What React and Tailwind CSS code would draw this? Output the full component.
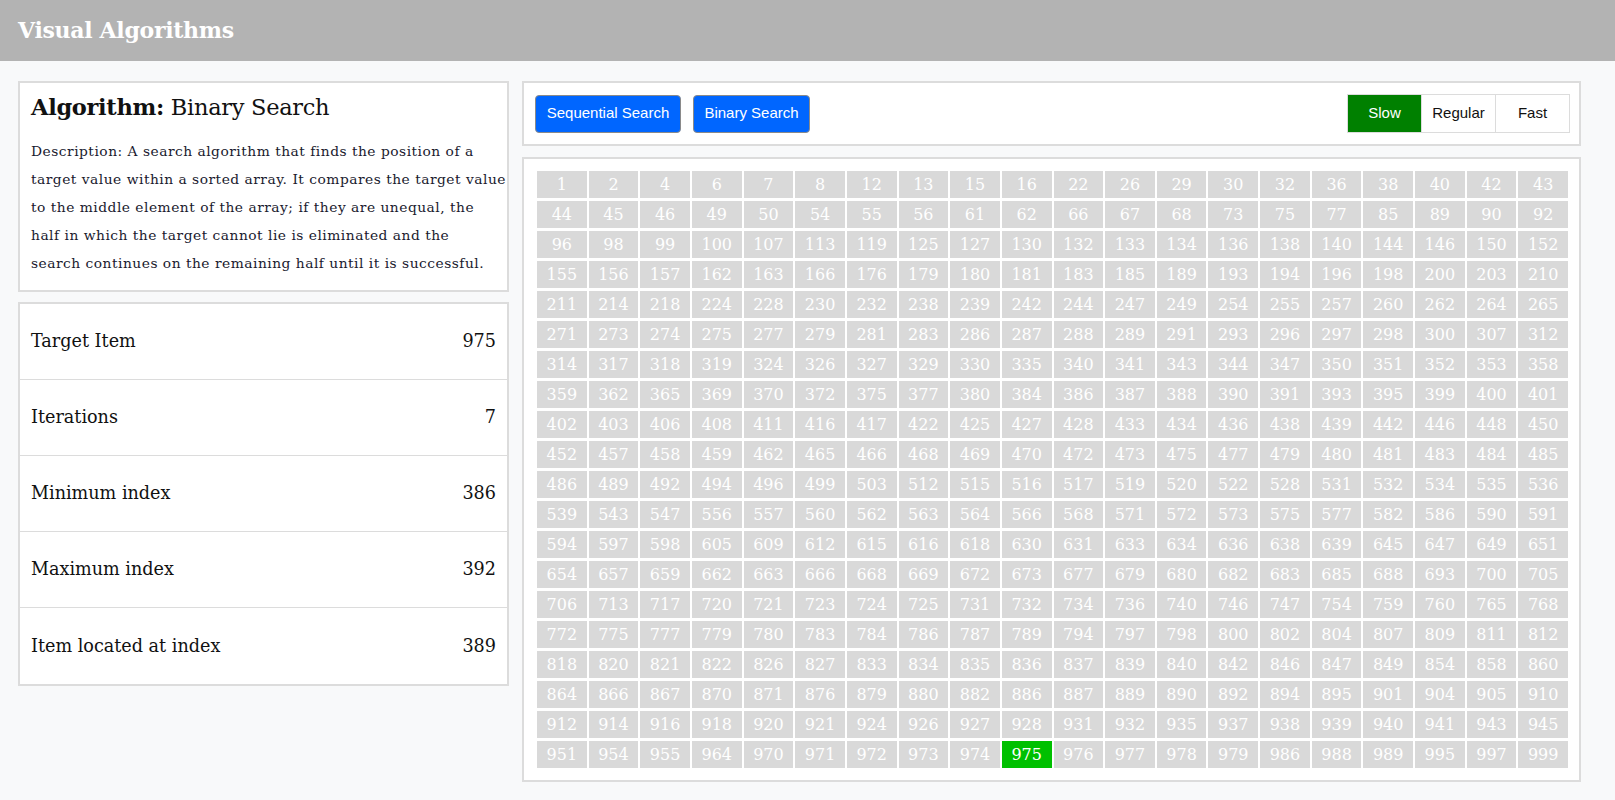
import { useState } from "react";

// Sorted array shown in the grid (20 x 20)
const items = [
  1, 2, 4, 6, 7, 8, 12, 13, 15, 16, 22, 26, 29, 30, 32, 36, 38, 40, 42, 43,
  44, 45, 46, 49, 50, 54, 55, 56, 61, 62, 66, 67, 68, 73, 75, 77, 85, 89, 90, 92,
  96, 98, 99, 100, 107, 113, 119, 125, 127, 130, 132, 133, 134, 136, 138, 140, 144, 146, 150, 152,
  155, 156, 157, 162, 163, 166, 176, 179, 180, 181, 183, 185, 189, 193, 194, 196, 198, 200, 203, 210,
  211, 214, 218, 224, 228, 230, 232, 238, 239, 242, 244, 247, 249, 254, 255, 257, 260, 262, 264, 265,
  271, 273, 274, 275, 277, 279, 281, 283, 286, 287, 288, 289, 291, 293, 296, 297, 298, 300, 307, 312,
  314, 317, 318, 319, 324, 326, 327, 329, 330, 335, 340, 341, 343, 344, 347, 350, 351, 352, 353, 358,
  359, 362, 365, 369, 370, 372, 375, 377, 380, 384, 386, 387, 388, 390, 391, 393, 395, 399, 400, 401,
  402, 403, 406, 408, 411, 416, 417, 422, 425, 427, 428, 433, 434, 436, 438, 439, 442, 446, 448, 450,
  452, 457, 458, 459, 462, 465, 466, 468, 469, 470, 472, 473, 475, 477, 479, 480, 481, 483, 484, 485,
  486, 489, 492, 494, 496, 499, 503, 512, 515, 516, 517, 519, 520, 522, 528, 531, 532, 534, 535, 536,
  539, 543, 547, 556, 557, 560, 562, 563, 564, 566, 568, 571, 572, 573, 575, 577, 582, 586, 590, 591,
  594, 597, 598, 605, 609, 612, 615, 616, 618, 630, 631, 633, 634, 636, 638, 639, 645, 647, 649, 651,
  654, 657, 659, 662, 663, 666, 668, 669, 672, 673, 677, 679, 680, 682, 683, 685, 688, 693, 700, 705,
  706, 713, 717, 720, 721, 723, 724, 725, 731, 732, 734, 736, 740, 746, 747, 754, 759, 760, 765, 768,
  772, 775, 777, 779, 780, 783, 784, 786, 787, 789, 794, 797, 798, 800, 802, 804, 807, 809, 811, 812,
  818, 820, 821, 822, 826, 827, 833, 834, 835, 836, 837, 839, 840, 842, 846, 847, 849, 854, 858, 860,
  864, 866, 867, 870, 871, 876, 879, 880, 882, 886, 887, 889, 890, 892, 894, 895, 901, 904, 905, 910,
  912, 914, 916, 918, 920, 921, 924, 926, 927, 928, 931, 932, 935, 937, 938, 939, 940, 941, 943, 945,
  951, 954, 955, 964, 970, 971, 972, 973, 974, 975, 976, 977, 978, 979, 986, 988, 989, 995, 997, 999,
];

const stats = [
  { label: "Target Item", value: 975 },
  { label: "Iterations", value: 7 },
  { label: "Minimum index", value: 386 },
  { label: "Maximum index", value: 392 },
  { label: "Item located at index", value: 389 },
];

// description broken the same way the original column wraps it
const descLines = [
  "Description: A search algorithm that finds the position of a",
  "target value within a sorted array. It compares the target value",
  "to the middle element of the array; if they are unequal, the",
  "half in which the target cannot lie is eliminated and the",
  "search continues on the remaining half until it is successful.",
];

const speeds = ["Slow", "Regular", "Fast"];

export default function App() {
  const [speed, setSpeed] = useState("Slow");
  const found = 389;

  return (
    <div className="min-h-screen bg-[#f8f9fa] font-['DejaVu_Serif',serif]">
      <header className="h-[61px] bg-[#b3b3b3] flex items-center px-[18px]">
        <h1 className="text-white text-[22px] font-bold tracking-[-0.3px]">Visual Algorithms</h1>
      </header>

      <main className="flex gap-[13px] pl-[18px] pt-[20px]">
        {/* left column */}
        <div className="w-[491px] flex flex-col gap-[10px]">
          <div className="border-2 border-[#dcdcdc] bg-white pl-[11px] pt-[8px] h-[211px] overflow-hidden">
            <h2 className="text-[22.5px] text-[#111] leading-[32px] tracking-[-0.3px]">
              <span className="font-bold">Algorithm:</span> Binary Search
            </h2>
            <p className="mt-[14px] text-[13.8px] leading-[28px] text-[#1a1a2e] tracking-[0.5px]">
              {descLines.map((l) => (
                <span key={l} className="block whitespace-nowrap">
                  {l}
                </span>
              ))}
            </p>
          </div>

          <div className="border-2 border-[#dcdcdc] bg-white">
            {stats.map((s, i) => (
              <div
                key={s.label}
                className={`h-[76px] flex items-center justify-between pl-[11px] pr-[11px] text-[17.6px] text-[#111] ${
                  i < stats.length - 1 ? "border-b border-[#dcdcdc]" : ""
                }`}
              >
                <span>{s.label}</span>
                <span>{s.value}</span>
              </div>
            ))}
          </div>
        </div>

        {/* right column */}
        <div className="w-[1059px] flex flex-col gap-[11px]">
          <div className="h-[65px] border-2 border-[#dcdcdc] bg-white flex items-center justify-between pl-[11px] pr-[9px] font-['Liberation_Sans',sans-serif]">
            <div className="flex gap-[12px]">
              <button
                type="button"
                className="h-[38px] w-[146px] rounded-[4px] border border-[#8a8a8a] bg-[#0066ff] text-white text-[15px]"
              >
                Sequential Search
              </button>
              <button
                type="button"
                className="h-[38px] w-[117px] rounded-[4px] border border-[#8a8a8a] bg-[#0066ff] text-white text-[15px]"
              >
                Binary Search
              </button>
            </div>
            <div className="flex">
              {speeds.map((sp) => (
                <button
                  key={sp}
                  type="button"
                  onClick={() => setSpeed(sp)}
                  className={`h-[39px] w-[75px] border border-[#dcdcdc] -ml-px text-[15px] ${
                    speed === sp ? "bg-[#008000] text-white" : "bg-white text-[#111]"
                  }`}
                >
                  {sp}
                </button>
              ))}
            </div>
          </div>

          <div className="border-2 border-[#dcdcdc] bg-white pt-[12px] pb-[12px] pl-[13px] pr-[11px]">
            <div className="grid grid-cols-20 gap-x-[2px] gap-y-[3px]">
              {items.map((n, idx) => (
                <div
                  key={idx}
                  className={`h-[27px] flex items-center justify-center text-[16px] text-white ${
                    idx === found ? "bg-[#00c000]" : "bg-[#d9d9d9]"
                  }`}
                >
                  {n}
                </div>
              ))}
            </div>
          </div>
        </div>
      </main>
    </div>
  );
}
